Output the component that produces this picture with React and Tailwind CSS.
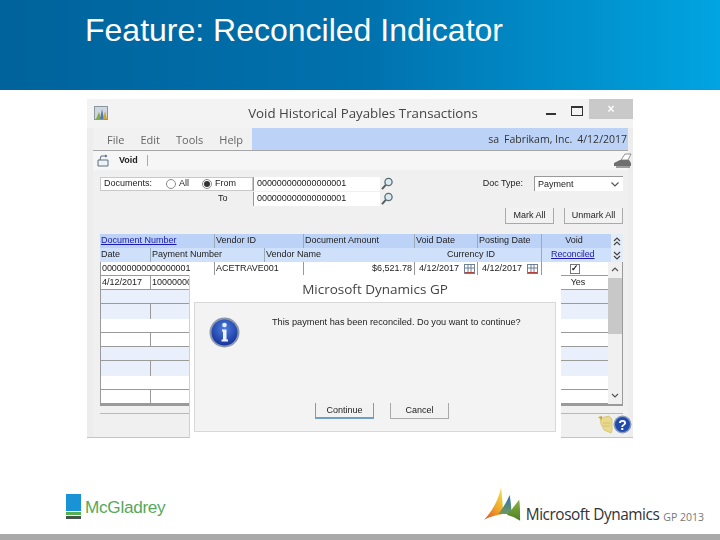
import React from 'react';

const rows = [
  { bg: 'bg-white', h: 'h-[14px] border-b', cells: true },
  { bg: 'bg-white', h: 'h-[14px] border-b', second: true },
  { bg: 'bg-[#e9f0fb]', h: 'h-[14px] border-b' },
  { bg: 'bg-[#e9f0fb]', h: 'h-[15px]', split: true },
  { bg: 'bg-white', h: 'h-[14px] border-b' },
  { bg: 'bg-white', h: 'h-[14px] border-b', split: true },
  { bg: 'bg-[#e9f0fb]', h: 'h-[14px] border-b' },
  { bg: 'bg-[#e9f0fb]', h: 'h-[15px]', split: true },
  { bg: 'bg-white', h: 'h-[14px] border-b' },
  { bg: 'bg-white', h: 'h-[14px] border-b', split: true },
];

function Magnifier() {
  return (
    <svg width="14" height="14" viewBox="0 0 14 14" className="shrink-0">
      <circle cx="8.5" cy="5" r="3.6" fill="#dfe9ee" stroke="#53707a" strokeWidth="1.3" />
      <path d="M5.8 7.8 L2 12.2" stroke="#53605f" strokeWidth="2" />
    </svg>
  );
}

function CalendarIcon() {
  return (
    <svg width="11" height="10" viewBox="0 0 11 10" className="shrink-0">
      <rect x="0.5" y="0.5" width="10" height="9" fill="#fff" stroke="#6f7f96" />
      <path d="M4 1V9M7 1V9M1 4H10" stroke="#6f7f96" />
      <path d="M1 8.5H10" stroke="#b0433c" />
    </svg>
  );
}

function Radio({ checked }) {
  return (
    <span className="flex h-[10px] w-[10px] shrink-0 items-center justify-center rounded-full border border-[#8a8a8a] bg-white">
      {checked && <span className="h-[6px] w-[6px] rounded-full bg-[#333]" />}
    </span>
  );
}

function DoubleChevron({ up }) {
  return (
    <svg width="8" height="9" viewBox="0 0 8 9">
      <path d={up ? 'M1 4L4 1L7 4M1 8L4 5L7 8' : 'M1 1L4 4L7 1M1 5L4 8L7 5'} fill="none" stroke="#444" strokeWidth="1.2" />
    </svg>
  );
}

function InfoIcon() {
  return (
    <svg width="31" height="31" viewBox="0 0 31 31" className="absolute left-[14px] top-[14px]">
      <defs>
        <radialGradient id="infoBlue" cx="50%" cy="35%" r="65%">
          <stop offset="0%" stopColor="#4d7fe0" />
          <stop offset="100%" stopColor="#17339a" />
        </radialGradient>
      </defs>
      <circle cx="15.5" cy="15.5" r="15" fill="#8b98ac" />
      <circle cx="15.5" cy="15.5" r="13" fill="url(#infoBlue)" />
      <circle cx="15.5" cy="8" r="2.3" fill="#e8eefc" />
      <path d="M13 12.5H17.5V22.5H19V24.5H12.5V22.5H14V14.5H13Z" fill="#eef3ff" />
    </svg>
  );
}

function HelpIcon() {
  return (
    <svg width="19" height="19" viewBox="0 0 19 19">
      <circle cx="9.5" cy="9.5" r="9" fill="#8a9bb5" />
      <circle cx="9.5" cy="9.5" r="7.5" fill="#1f4bb0" />
      <text x="9.5" y="14.5" textAnchor="middle" fontSize="14" fontWeight="700" fill="#fff" fontFamily="'Liberation Sans', sans-serif">?</text>
    </svg>
  );
}

function NoteIcon() {
  return (
    <svg width="15" height="19" viewBox="0 0 15 19">
      <path d="M2 3L11 1L14 4V16L13 18L6 15L3 9Z" fill="#e9d98a" stroke="#c9b65a" strokeWidth="0.6" />
      <path d="M0 2L4 1L4 5Z" fill="#c9a838" />
      <path d="M5 8H12M5 11H12" stroke="#d2c270" />
    </svg>
  );
}

function PrinterIcon() {
  return (
    <svg width="19" height="15" viewBox="0 0 19 15">
      <path d="M1 10L7 7H16L18 10V13H1Z" fill="#6f6f6f" />
      <path d="M8 7L12 1H18L15 7Z" fill="#fff" stroke="#777" strokeWidth="0.8" />
      <path d="M3 14H17" stroke="#444" />
    </svg>
  );
}

function AppIcon() {
  return (
    <svg width="14" height="15" viewBox="0 0 14 15">
      <rect x="0.5" y="0.5" width="13" height="13" fill="#cfd8e0" stroke="#8a96a0" />
      <path d="M2 13L5 6L7 13Z" fill="#7fae3c" />
      <path d="M6 13L8 3L10 13Z" fill="#4f78b8" />
      <path d="M9 13L11 5L13 13Z" fill="#d4a52c" />
    </svg>
  );
}

function VoidIcon() {
  return (
    <svg width="13" height="13" viewBox="0 0 13 13">
      <path d="M1 6H11V12H1Z" fill="#eef3f7" stroke="#5f6f80" />
      <path d="M3 6L4 2H10" fill="none" stroke="#5f6f80" />
      <path d="M8 0.5L10.5 2L8 3.5" fill="#3f78b0" />
    </svg>
  );
}

function DynamicsLogo() {
  return (
    <svg width="38" height="36" viewBox="0 0 40 37" className="shrink-0">
      <defs>
        <linearGradient id="dynYellow" x1="0" y1="1" x2="0.6" y2="0">
          <stop offset="0%" stopColor="#d9542b" />
          <stop offset="55%" stopColor="#f0a52a" />
          <stop offset="100%" stopColor="#f2d640" />
        </linearGradient>
        <linearGradient id="dynBlue" x1="0" y1="1" x2="0" y2="0">
          <stop offset="0%" stopColor="#6f9a5a" />
          <stop offset="100%" stopColor="#2f6fb5" />
        </linearGradient>
        <linearGradient id="dynGreen" x1="0" y1="1" x2="0" y2="0">
          <stop offset="0%" stopColor="#4f7f22" />
          <stop offset="100%" stopColor="#86b540" />
        </linearGradient>
      </defs>
      <path d="M0 34C8 26 15 14 18 0C19 10 20 20 20 28C12 29 6 31 0 34Z" fill="url(#dynYellow)" />
      <path d="M15 28C20 22 24 15 27 8C28 14 29 22 29 28C24 28 20 28 15 28Z" fill="url(#dynBlue)" />
      <path d="M24 29C29 24 33 18 37 13C38 18 38 28 38 35C33 32 29 30 24 29Z" fill="url(#dynGreen)" />
    </svg>
  );
}

function App() {
  return (
    <div className="flex h-[540px] w-[720px] flex-col overflow-hidden bg-white font-['Liberation_Sans',sans-serif]">
      <header className="h-[90px] shrink-0 bg-gradient-to-r from-[#00639b] via-[#0071ad] to-[#00a5e1] pl-[85px] pt-[10px]">
        <h1 className="text-[32px] leading-[40px] text-white">Feature: Reconciled Indicator</h1>
      </header>

      <main className="shrink-0 pl-[87px] pt-[9px]">
        <div className="relative flex h-[339px] w-[546px] flex-col border-b border-[#c4c4c4] bg-[#ededed] text-[9px] leading-[13px] text-[#222] blur-[0.4px]">
          {/* title bar */}
          <div className="relative flex h-[29px] shrink-0 items-center justify-center bg-[#f3f3f3]">
            <span className="absolute left-[7px] top-[7px]"><AppIcon /></span>
            <span className="pl-[6px] font-['Open_Sans',sans-serif] text-[13.3px] text-[#444]">Void Historical Payables Transactions</span>
            <span className="absolute left-[459px] top-[14px] h-[2px] w-[10px] bg-[#333]" />
            <span className="absolute left-[484px] top-[7px] h-[10px] w-[12px] border border-t-2 border-[#333]" />
            <span className="absolute right-0 top-0 flex h-[20px] w-[44px] items-center justify-center bg-[#c9c9c9] text-[12px] font-bold text-white">×</span>
          </div>

          <div className="flex flex-1 flex-col pl-[6px] pr-[5px]">
            {/* menu */}
            <div className="flex h-[23px] shrink-0 border-b border-[#a6a6a6] font-['Open_Sans',sans-serif] text-[11px] text-[#666]">
              <div className="flex w-[159px] items-center gap-[16px] bg-[#f1f1f1] pl-[14px]">
                <span>File</span>
                <span>Edit</span>
                <span>Tools</span>
                <span>Help</span>
              </div>
              <div className="flex flex-1 items-center justify-end gap-[5px] bg-[#bcd2f6] pr-[1px] text-[10.5px] text-[#333]">
                <span>sa</span>
                <span>Fabrikam, Inc.</span>
                <span>4/12/2017</span>
              </div>
            </div>

            {/* toolbar */}
            <div className="flex h-[19px] shrink-0 items-center bg-[#f6f6f6] pl-[4px]">
              <VoidIcon />
              <span className="ml-[9px] font-bold">Void</span>
              <span className="ml-[9px] h-[11px] w-px bg-[#aaa]" />
              <span className="ml-auto mr-[-4px]"><PrinterIcon /></span>
            </div>

            {/* body */}
            <div className="flex flex-1 flex-col bg-[#f0f0f0] pl-[7px] pr-[5px] pt-[6px]">
              <div className="flex h-[29px] shrink-0 items-start justify-between">
                <div className="flex flex-col">
                  <div className="flex h-[15px] items-center">
                    <div className="flex h-[14px] w-[153px] items-center border border-[#c8c8c8] bg-white pl-[3px]">
                      <span className="w-[62px]">Documents:</span>
                      <Radio />
                      <span className="ml-[1px] w-[25px] pl-[2px]">All</span>
                      <Radio checked />
                      <span className="ml-[1px] pl-[2px]">From</span>
                    </div>
                    <span className="flex h-[14px] w-[127px] items-center border-l border-[#999] bg-white pl-[3px] tracking-[-0.05px]">000000000000000001</span>
                    <Magnifier />
                  </div>
                  <div className="flex h-[15px] items-center">
                    <span className="w-[153px] pl-[118px]">To</span>
                    <span className="flex h-[14px] w-[127px] items-center border-l border-[#999] bg-white pl-[3px] tracking-[-0.05px]">000000000000000001</span>
                    <Magnifier />
                  </div>
                </div>
                <div className="flex items-start">
                  <span className="mr-[11px] pt-[1px]">Doc Type:</span>
                  <span className="flex h-[15px] w-[89px] items-center justify-between border-l border-t border-[#999] bg-white pl-[3px] pr-[4px]">
                    Payment
                    <svg width="8" height="5" viewBox="0 0 8 5"><path d="M0.5 0.5L4 4L7.5 0.5" fill="none" stroke="#555" strokeWidth="1.2" /></svg>
                  </span>
                </div>
              </div>

              <div className="mt-[3px] flex h-[16px] shrink-0 justify-end gap-[10px]">
                <button className="h-[16px] w-[49px] border-x border-b border-[#aaa] bg-[#f2f2f2]">Mark All</button>
                <button className="h-[16px] w-[59px] border-x border-b border-[#aaa] bg-[#f2f2f2]">Unmark All</button>
              </div>

              {/* table */}
              <div className="mt-[10px] flex h-[14px] w-[523px] shrink-0 bg-[#bcd2f6]">
                <span className="w-[115px] border-r border-[#9ab] pl-[1px] text-[#1a1ab0] underline">Document Number</span>
                <span className="w-[89px] border-r border-[#9ab] pl-[1px]">Vendor ID</span>
                <span className="w-[111px] border-r border-[#9ab] pl-[1px]">Document Amount</span>
                <span className="w-[63px] border-r border-[#9ab] pl-[1px]">Void Date</span>
                <span className="w-[64px] border-r border-[#9ab] pl-[1px]">Posting Date</span>
                <span className="w-[68px] pr-[4px] text-center">Void</span>
                <span className="ml-px flex w-[12px] items-center justify-center bg-[#e4ecf8]"><DoubleChevron up /></span>
              </div>
              <div className="flex h-[14px] w-[523px] shrink-0 bg-[#cfe0fa]">
                <span className="w-[51px] border-r border-[#9ab] pl-[1px]">Date</span>
                <span className="w-[114px] border-r border-[#9ab] pl-[1px]">Payment Number</span>
                <span className="w-[175px] pl-[1px]">Vendor Name</span>
                <span className="w-[102px] border-r border-[#9ab] pl-[7px]">Currency ID</span>
                <span className="w-[68px] pl-[9px] tracking-[-0.1px] text-[#1a1ab0] underline">Reconciled</span>
                <span className="ml-px flex w-[12px] items-center justify-center bg-[#e4ecf8]"><DoubleChevron /></span>
              </div>

              <div className="flex w-[523px] shrink-0 border-b-2 border-[#9a9a9a]">
                <div className="w-[508px] border-l border-[#9a9a9a]">
                  {rows.map((r, i) => (
                    <div key={i} className={`flex border-[#9a9a9a] ${r.bg} ${r.h}`}>
                      {r.cells && (
                        <>
                          <span className="w-[114px] border-r border-[#999] pl-[1px] tracking-[-0.1px]">000000000000000001</span>
                          <span className="w-[89px] border-r border-[#999] pl-[1px]">ACETRAVE001</span>
                          <span className="w-[111px] border-r border-[#999] pr-[2px] text-right">$6,521.78</span>
                          <span className="flex w-[63px] items-center gap-[5px] border-r border-[#999] pl-[4px]">4/12/2017<CalendarIcon /></span>
                          <span className="flex w-[64px] items-center gap-[5px] border-r border-[#999] pl-[4px]">4/12/2017<CalendarIcon /></span>
                          <span className="flex flex-1 items-center justify-center">
                            <span className="flex h-[10px] w-[10px] items-center justify-center border border-[#777] bg-white text-[9px] font-bold leading-none">✓</span>
                          </span>
                        </>
                      )}
                      {r.second && (
                        <>
                          <span className="w-[50px] border-r border-[#999] pl-[1px]">4/12/2017</span>
                          <span className="flex-1 pl-[1px]">10000000</span>
                          <span className="w-[60px] text-center">Yes</span>
                        </>
                      )}
                      {r.split && <span className="w-[50px] border-r border-[#999]" />}
                    </div>
                  ))}
                </div>
                <div className="flex w-[15px] flex-col items-center border-r border-[#9a9a9a] bg-[#f0f0f0]">
                  <svg width="8" height="16" viewBox="0 0 8 16"><path d="M1 9L4 6L7 9" fill="none" stroke="#555" strokeWidth="1.2" /></svg>
                  <div className="h-[56px] w-full bg-[#c8c8c8]" />
                  <svg width="8" height="16" viewBox="0 0 8 16" className="mt-auto"><path d="M1 6L4 9L7 6" fill="none" stroke="#555" strokeWidth="1.2" /></svg>
                </div>
              </div>

              <div className="mt-[7px] flex flex-1 items-start justify-end border-t border-[#b8b8b8]">
                <span className="mt-[1px]"><NoteIcon /></span>
                <span className="mr-[-9px] mt-[1px]"><HelpIcon /></span>
              </div>
            </div>
          </div>

          {/* message box */}
          <div className="absolute left-[102px] top-[176px] flex h-[163px] w-[372px] flex-col border-l border-[#d0d0d0] bg-white pb-[6px] pl-[4px] pr-[5px]">
            <div className="flex h-[27px] shrink-0 items-center justify-center pt-[2px] font-['Open_Sans',sans-serif] text-[13.5px] text-[#444]">Microsoft Dynamics GP</div>
            <div className="relative flex-1 border border-[#d8d8d8] bg-[#f3f3f3]">
              <InfoIcon />
              <p className="absolute left-[77px] top-[13px] whitespace-nowrap text-[9.2px]">This payment has been reconciled. Do you want to continue?</p>
              <div className="absolute left-[120px] top-[100px] flex gap-[16px]">
                <button className="h-[16px] w-[59px] border-x border-b-2 border-[#6f9fc8] bg-[#f2f2f2]">Continue</button>
                <button className="h-[16px] w-[59px] border-x border-b border-[#aaa] bg-[#f2f2f2]">Cancel</button>
              </div>
            </div>
          </div>
        </div>
      </main>

      {/* logos */}
      <footer className="flex flex-1 flex-col">
        <div className="flex flex-1 items-start justify-between pl-[66px] pr-[16px]">
          <div className="mt-[56px] flex items-center gap-[4px]">
            <div className="flex w-[15px] flex-col gap-[1px]">
              <span className="h-[17px] bg-[#1a93d6]" />
              <span className="h-[3px] bg-[#55b04f]" />
              <span className="h-[3px] bg-[#44554a]" />
            </div>
            <span className="pt-[1px] text-[17.2px] leading-[24px] tracking-[-0.3px] text-[#55a85a]">McGladrey</span>
          </div>
          <div className="mt-[49px] flex items-end">
            <DynamicsLogo />
            <span className="mb-[-2px] ml-[4px] font-['Open_Sans',sans-serif] text-[15.4px] leading-[20px] tracking-[-0.45px] text-[#333]">Microsoft Dynamics</span>
            <span className="mb-[-2px] ml-[4px] font-['Open_Sans',sans-serif] text-[10.5px] leading-[16px] text-[#777]">GP 2013</span>
          </div>
        </div>
        <div className="h-[6px] shrink-0 bg-[#a9a9a9]" />
      </footer>
    </div>
  );
}

export default App;
